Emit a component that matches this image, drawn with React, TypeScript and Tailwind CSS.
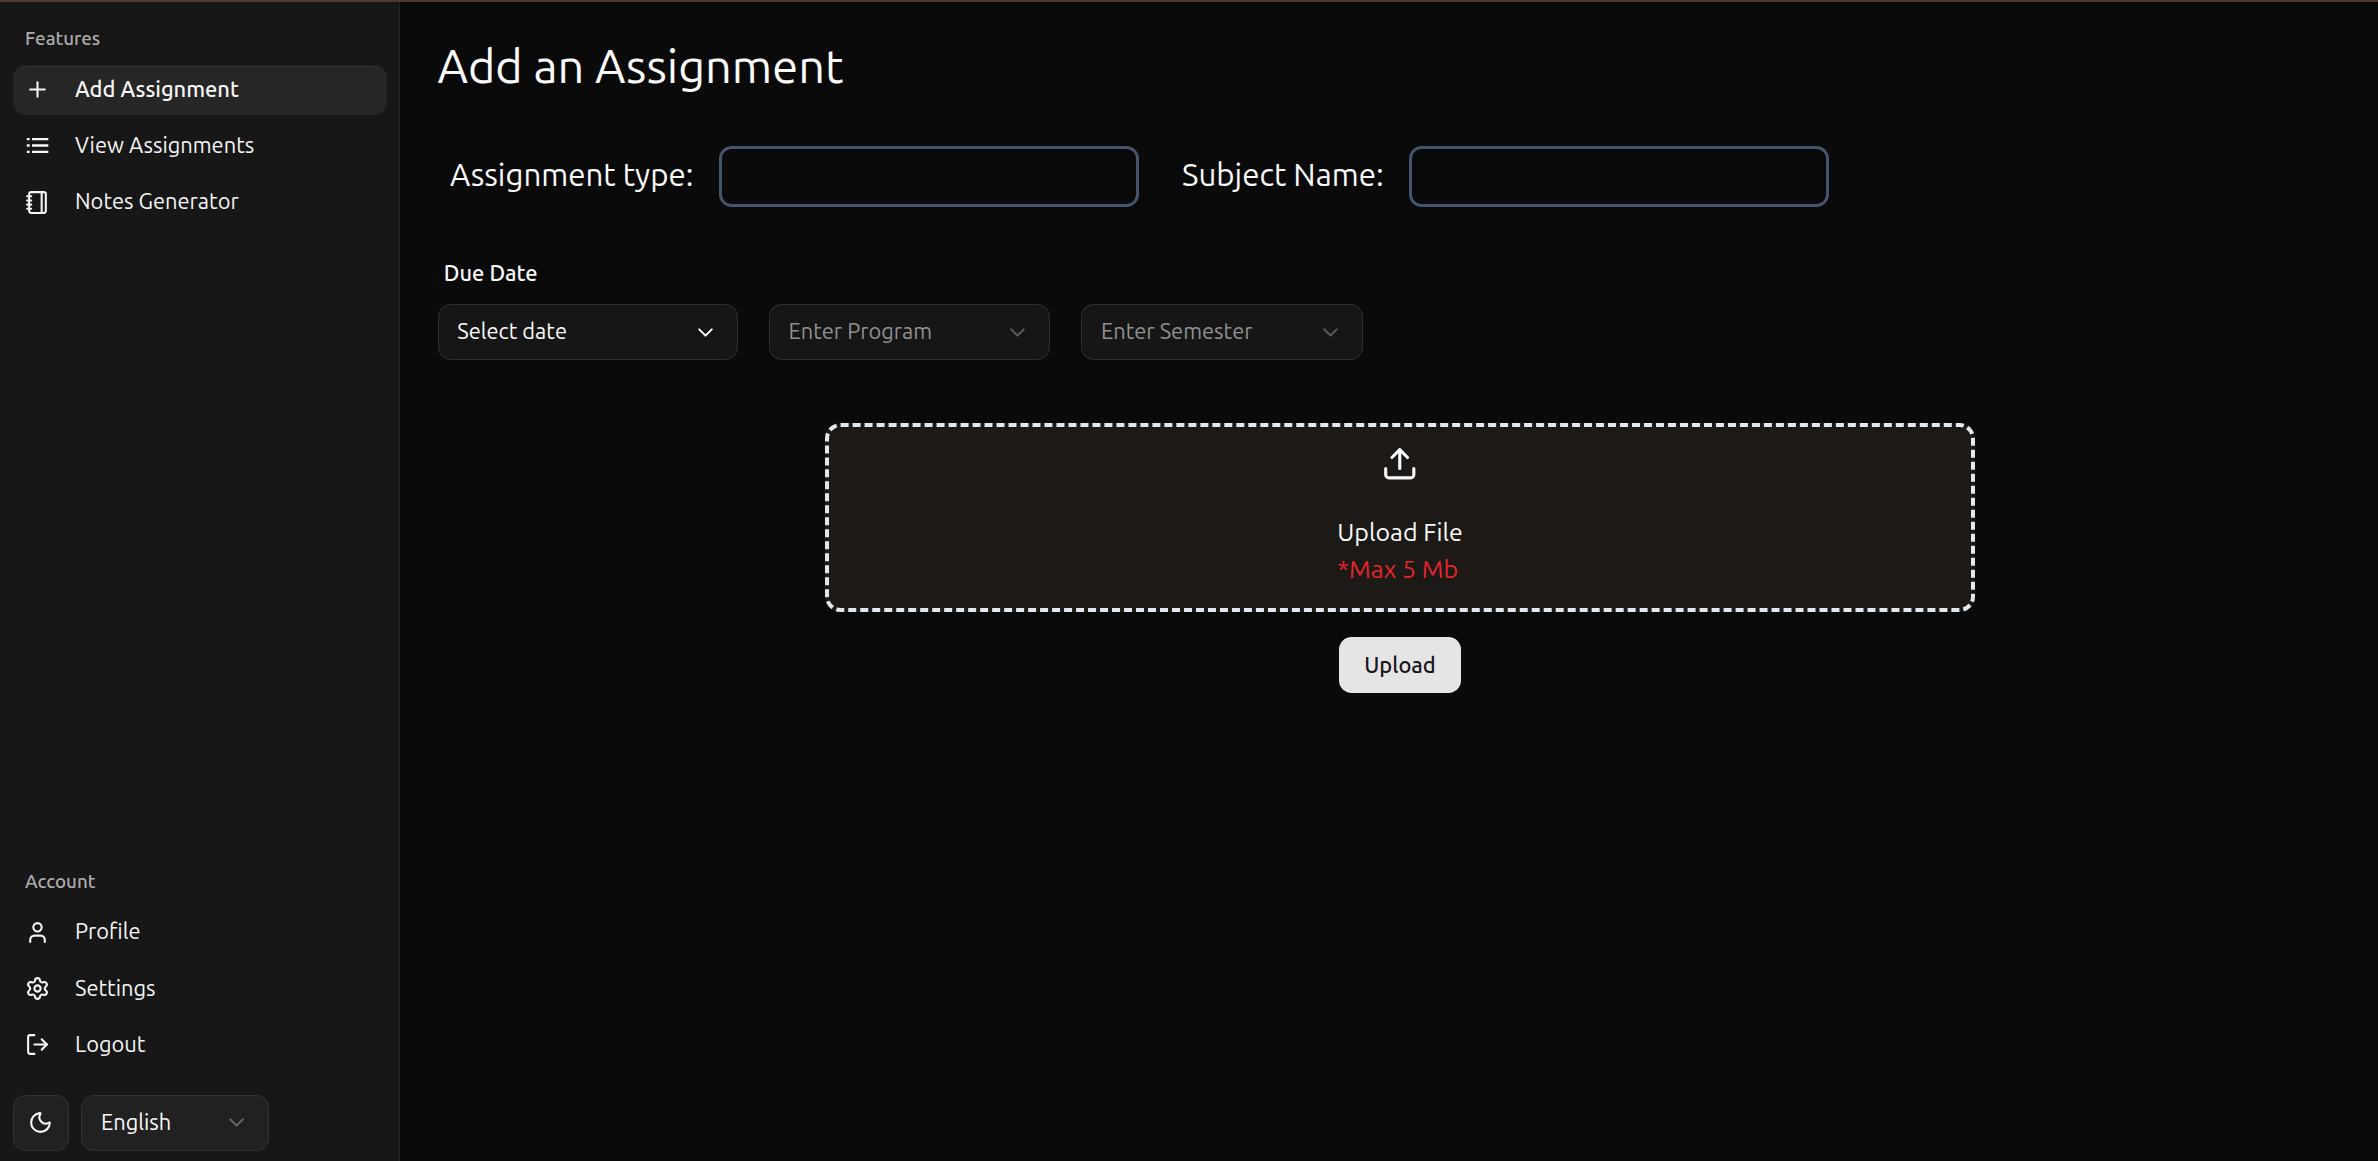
import type { ComponentType, ReactNode, SVGProps } from "react";
import { ChevronDown, LogOut, Moon, Notebook, Plus, Settings, Upload, User } from "lucide-react";

type Icon = ComponentType<SVGProps<SVGSVGElement>>;

function ListIcon(props: SVGProps<SVGSVGElement>) {
  return (
    <svg viewBox="0 0 24 24" fill="currentColor" {...props}>
      <path d="M1.7 4.8h2.8v2.2H1.7zM1.7 10.9h2.8v2.2H1.7zM1.7 17h2.8v2.2H1.7zM6.7 4.8h15.7v2.2H6.7zM6.7 10.9h15.7v2.2H6.7zM6.7 17h15.7v2.2H6.7z" />
    </svg>
  );
}

function NavItem({ icon: ItemIcon, label, active = false }: { icon: Icon; label: string; active?: boolean }) {
  return (
    <li>
      <a
        className={
          active
            ? "flex h-8 items-center gap-4 rounded-lg bg-[#262626] px-2 text-sm font-medium text-neutral-100"
            : "flex h-8 items-center gap-4 rounded-lg px-2 text-sm text-neutral-100"
        }
      >
        <ItemIcon className="size-4 shrink-0" />
        <span>{label}</span>
      </a>
    </li>
  );
}

function NavGroup({ title, children }: { title: string; children: ReactNode }) {
  return (
    <section className="p-2">
      <h2 className="flex h-8 items-center px-2 pb-[1.3px] text-xs font-medium text-[#acacac]">{title}</h2>
      <ul className="flex flex-col gap-1">{children}</ul>
    </section>
  );
}

function Field({ label, className }: { label: string; className: string }) {
  return (
    <label className={className}>
      <span className="pb-[1.3px] text-xl">{label}</span>
      <input className="h-[39.2px] w-[268.8px] rounded-lg border-2 border-[#45556c] bg-transparent px-2 outline-none" />
    </label>
  );
}

function DisabledSelect({ label }: { label: string }) {
  return (
    <button className="flex h-9 w-[180px] items-center justify-between rounded-lg border border-[#303030] bg-[#161616] px-3 text-sm text-[#909090]">
      {label}
      <ChevronDown className="size-4 text-[#5c5c5c]" />
    </button>
  );
}

export default function App() {
  return (
    <div className="flex h-[743.04px] w-full overflow-hidden border-t-[1.28px] border-[#4c3a32] bg-[#0a0a0a] font-['Ubuntu','Noto_Sans',sans-serif] text-neutral-50 [zoom:1.5625]">
      <aside className="flex w-64 shrink-0 flex-col border-r border-[#262626] bg-[#171717]">
        <NavGroup title="Features">
          <NavItem icon={Plus} label="Add Assignment" active />
          <NavItem icon={ListIcon} label="View Assignments" />
          <NavItem icon={Notebook} label="Notes Generator" />
        </NavGroup>
        <div className="mt-auto -mb-[1.5px]">
          <NavGroup title="Account">
            <NavItem icon={User} label="Profile" />
            <NavItem icon={Settings} label="Settings" />
            <NavItem icon={LogOut} label="Logout" />
          </NavGroup>
          <div className="flex gap-2 p-2">
            <button className="flex size-9 items-center justify-center rounded-lg border border-[#343434] bg-[#212121]">
              <Moon className="size-4" />
            </button>
            <button className="flex h-9 w-[120px] items-center justify-between rounded-lg border border-[#343434] bg-[#212121] px-3 text-sm">
              English
              <ChevronDown className="size-4 text-[#676767]" />
            </button>
          </div>
        </div>
      </aside>

      <main className="flex flex-1 flex-col pt-6 pr-[9.9px] pl-6">
        <h1 className="h-9 text-3xl leading-[33.2px]">Add an Assignment</h1>

        <div className="mt-8 flex h-[39.2px] items-center pl-2">
          <Field label="Assignment type:" className="flex w-[441px] items-center justify-between" />
          <Field label="Subject Name:" className="ml-[27.5px] flex w-[413.9px] items-center justify-between" />
        </div>

        <div className="mt-9 flex items-end gap-5">
          <div className="flex flex-col gap-3">
            <span className="px-1 text-sm leading-none font-medium">Due Date</span>
            <button className="flex h-9 w-48 items-center justify-between rounded-lg border border-[#303030] bg-[#161616] px-3 text-sm">
              Select date
              <ChevronDown className="size-4" />
            </button>
          </div>
          <DisabledSelect label="Enter Program" />
          <DisabledSelect label="Enter Semester" />
        </div>

        <div className="mt-10 flex flex-col items-center gap-4">
          <div className="flex h-[121.2px] w-[736px] flex-col items-center rounded-[10px] border-3 border-dashed border-slate-200 bg-stone-900 pt-[11.8px]">
            <Upload className="size-6" />
            <div className="mt-5 text-base">
              <p>Upload File</p>
              <p className="text-[#e3252c]">*Max 5 Mb</p>
            </div>
          </div>
          <button className="h-9 rounded-lg bg-neutral-200 px-4 text-sm font-medium text-neutral-900">Upload</button>
        </div>
      </main>
    </div>
  );
}
